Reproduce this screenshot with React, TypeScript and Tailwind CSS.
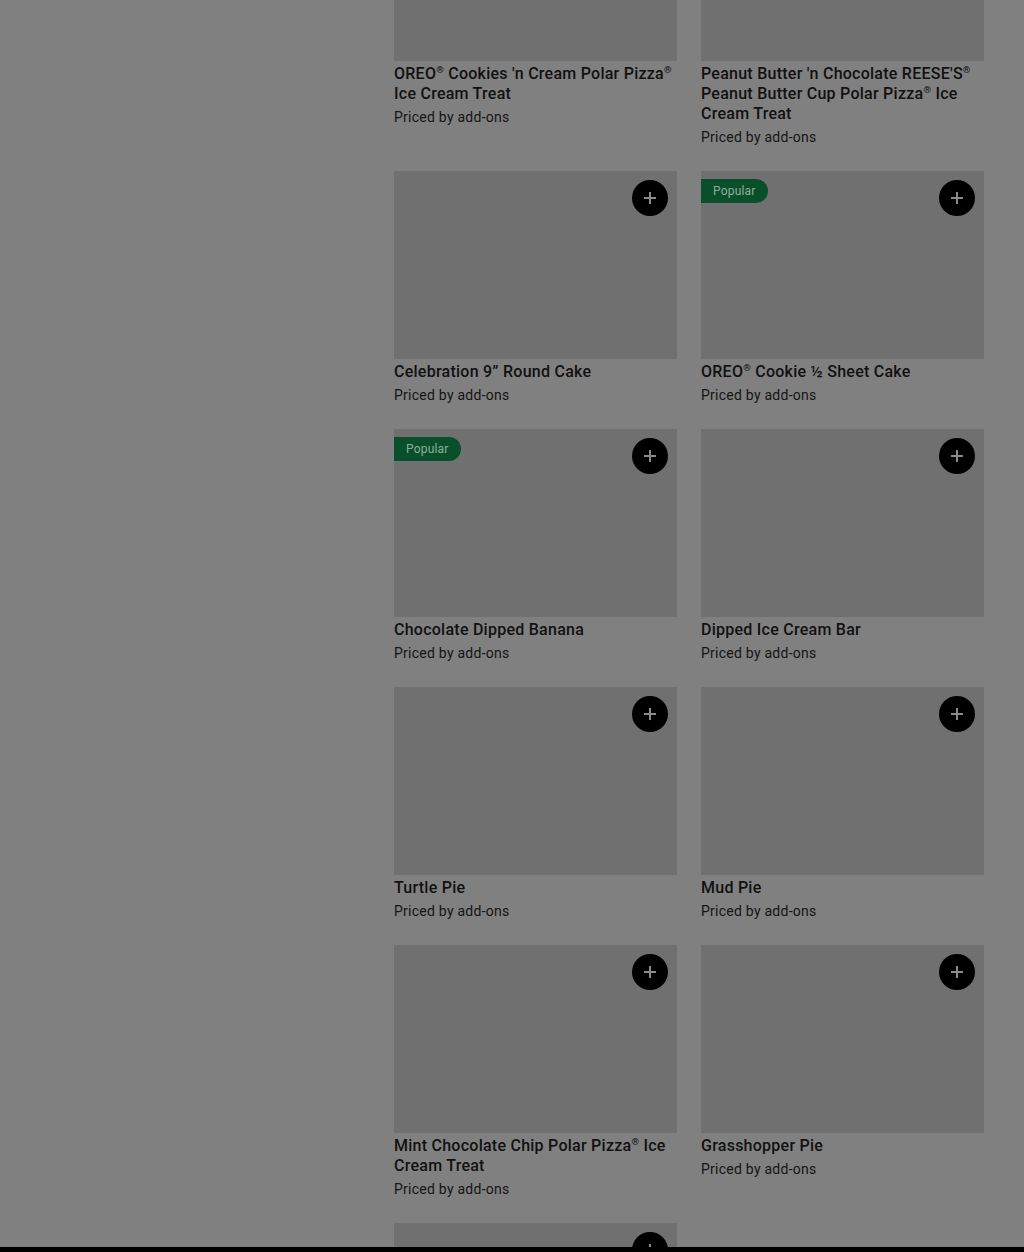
import React from "react";

type Item = { name: string; popular?: boolean; imageOnly?: boolean };

const rows: Item[][] = [
  [
    { name: "OREO® Cookies 'n Cream Polar Pizza® Ice Cream Treat" },
    { name: "Peanut Butter 'n Chocolate REESE'S® Peanut Butter Cup Polar Pizza® Ice Cream Treat" },
  ],
  [
    { name: "Celebration 9” Round Cake" },
    { name: "OREO® Cookie ½ Sheet Cake", popular: true },
  ],
  [
    { name: "Chocolate Dipped Banana", popular: true },
    { name: "Dipped Ice Cream Bar" },
  ],
  [{ name: "Turtle Pie" }, { name: "Mud Pie" }],
  [{ name: "Mint Chocolate Chip Polar Pizza® Ice Cream Treat" }, { name: "Grasshopper Pie" }],
  [{ name: "", imageOnly: true }],
];

function Title({ text }: { text: string }) {
  const parts = text.split("®");
  return (
    <>
      {parts.map((p, i) => (
        <React.Fragment key={i}>
          {p}
          {i < parts.length - 1 && (
            <span className="align-super text-[0.6em] leading-none">®</span>
          )}
        </React.Fragment>
      ))}
    </>
  );
}

function Card({ item }: { item: Item }) {
  return (
    <div className="flex flex-col pb-6">
      <div className="relative h-[188px] bg-[#707070]">
        {item.popular && (
          <div className="absolute left-0 top-2 flex h-6 items-center rounded-r-full bg-[#0a4f2c] pl-3 pr-3 text-[12px] leading-none tracking-[0.2px] text-[#8fae99]">
            Popular
          </div>
        )}
        <div className="absolute right-[9px] top-[9px] flex h-9 w-9 items-center justify-center rounded-full bg-black">
          <svg width="14" height="14" viewBox="0 0 14 14">
            <path d="M7 1v12M1 7h12" stroke="#8a8a8a" strokeWidth="2" />
          </svg>
        </div>
      </div>
      {!item.imageOnly && (
        <>
          <div className="mt-[3px] text-[16px] font-medium leading-5 tracking-[0.25px] text-[#111]">
            <Title text={item.name} />
          </div>
          <div className="mt-[3px] text-[14px] leading-5 tracking-[0.25px] text-[#141414]">
            Priced by add-ons
          </div>
        </>
      )}
    </div>
  );
}

export default function App() {
  return (
    <div
      className="relative h-[1252px] w-[1024px] overflow-hidden bg-[#808080]"
      style={{ fontFamily: "Roboto, 'Noto Sans', sans-serif" }}
    >
      <div className="ml-[394px] mt-[-127px] grid w-[590px] grid-cols-2 gap-x-6">
        {rows.flat().map((it, i) => (
          <Card key={i} item={it} />
        ))}
      </div>
      <div className="absolute bottom-0 left-0 h-[5px] w-full bg-black" />
    </div>
  );
}
